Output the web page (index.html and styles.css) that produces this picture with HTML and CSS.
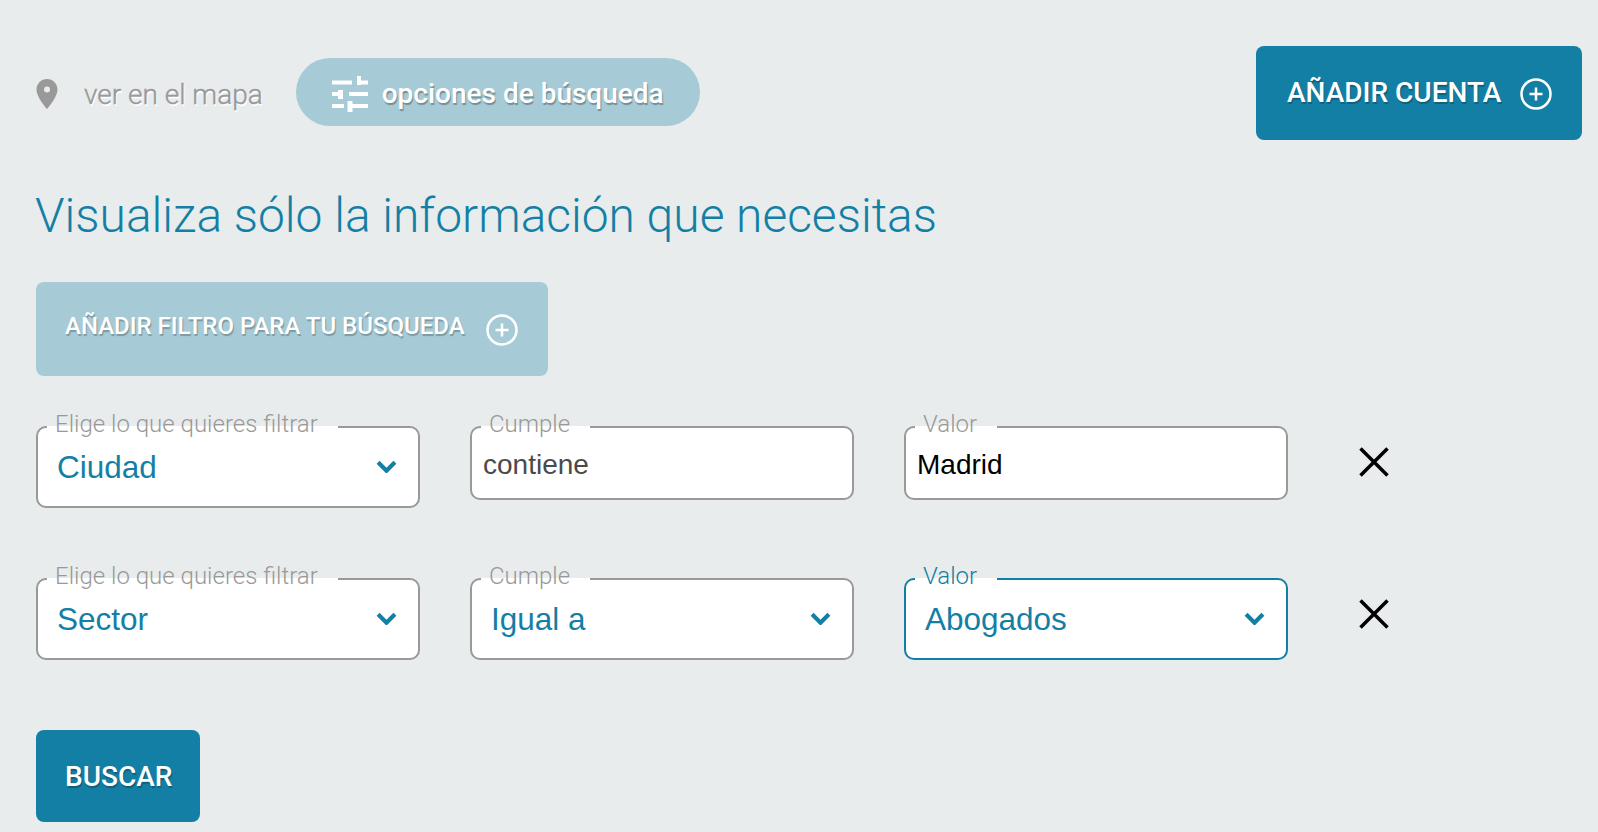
FILE: index.html
```html
<!DOCTYPE html>
<html lang="es">
<head>
<meta charset="utf-8">
<title>Visualiza sólo la información que necesitas</title>
<link rel="stylesheet" href="styles.css">
</head>
<body>
<main class="page">
  <header class="topbar">
    <div class="tools">
      <a class="map-link">
        <svg class="pin" viewBox="5 2 14 20"><path fill-rule="evenodd" d="M12 2C8.130 2 5 5.130 5 9c0 5.250 7 13 7 13s7-7.750 7-13c0-3.870-3.130-7-7-7zm0 9a2 2 0 0 1 0-4 2 2 0 0 1 0 4z"/></svg>
        <span>ver en el mapa</span>
      </a>
      <button class="pill">
        <svg class="sliders" viewBox="0 0 36 36"><path d="M0 4.500h20v4H0zM25 0h4v4.500h7v4h-7V9h-4zM0 16h6v4H0zM6 14h5v9H6zM17 16h19v4H17zM0 28h12v4H0zM15.500 25h5v3H36v4H20.500v4h-5z"/></svg>
        <span>opciones de búsqueda</span>
      </button>
    </div>
    <button class="btn btn-account">
      <span>AÑADIR CUENTA</span>
      <svg class="plus" viewBox="0 0 32 32"><circle cx="16" cy="16" r="14.500"/><path d="M16 9.500v13M9.500 16h13"/></svg>
    </button>
  </header>

  <h1 class="title">Visualiza sólo la información que necesitas</h1>

  <button class="btn btn-filter">
    <span>AÑADIR FILTRO PARA TU BÚSQUEDA</span>
    <svg class="plus plus-low" viewBox="0 0 32 32"><circle cx="16" cy="16" r="14.500"/><path d="M16 9.500v13M9.500 16h13"/></svg>
  </button>

  <section class="row">
    <div class="field select">
      <label class="lab lab-long">Elige lo que quieres filtrar</label>
      <span class="value">Ciudad</span>
      <svg class="chev" viewBox="0 0 20 12"><path d="M2 2l8 8 8-8"/></svg>
    </div>
    <div class="field input">
      <label class="lab">Cumple</label>
      <span class="text muted">contiene</span>
    </div>
    <div class="field input">
      <label class="lab">Valor</label>
      <span class="text">Madrid</span>
    </div>
    <svg class="close" viewBox="0 0 30 30"><path d="M1.500 1.500l27 27M28.500 1.500l-27 27"/></svg>
  </section>

  <section class="row">
    <div class="field select">
      <label class="lab lab-long">Elige lo que quieres filtrar</label>
      <span class="value">Sector</span>
      <svg class="chev" viewBox="0 0 20 12"><path d="M2 2l8 8 8-8"/></svg>
    </div>
    <div class="field select">
      <label class="lab">Cumple</label>
      <span class="value">Igual a</span>
      <svg class="chev" viewBox="0 0 20 12"><path d="M2 2l8 8 8-8"/></svg>
    </div>
    <div class="field select active">
      <label class="lab">Valor</label>
      <span class="value">Abogados</span>
      <svg class="chev" viewBox="0 0 20 12"><path d="M2 2l8 8 8-8"/></svg>
    </div>
    <svg class="close" viewBox="0 0 30 30"><path d="M1.500 1.500l27 27M28.500 1.500l-27 27"/></svg>
  </section>

  <button class="btn btn-search"><span>BUSCAR</span></button>
</main>
</body>
</html>
```
FILE: styles.css
```css
* { box-sizing: border-box; }
html, body { margin: 0; height: 100%; }
body {
  background: #e8eced;
  font-family: Roboto, "Liberation Sans", sans-serif;
  overflow: hidden;
}
.page { padding: 46px 16px 0 36px; }
.topbar { display: flex; justify-content: space-between; align-items: center; }
.tools { display: flex; align-items: center; margin-top: -2px; }
.map-link {
  display: flex; align-items: center; padding-top: 4px;
  color: #999; font-size: 28px; font-weight: 300;
  -webkit-text-stroke: .4px #999;
  text-shadow: 1px 2px 0 #fff;
}
.pin { width: 22px; height: 30px; fill: #999; margin-right: 26px; }
.pill {
  display: flex; align-items: center;
  width: 404px; height: 68px; margin-left: 33px; padding: 4px 0 0 36px;
  border: 0; border-radius: 34px; background: #a6cbd7;
  color: #fff; font: 500 28px Roboto, sans-serif;
  text-shadow: 1px 2px 1px rgba(0, 0, 0, .3);
}
.sliders { width: 36px; height: 36px; fill: #fff; margin-right: 14px; }
.pill span { position: relative; top: -1px; }
.btn {
  display: flex; align-items: center;
  border: 0; border-radius: 8px; background: #147fa5;
  color: #fff; font: 500 28px Roboto, sans-serif;
  text-shadow: 1px 2px 1px rgba(0, 0, 0, .25);
}
.plus { width: 32px; height: 32px; fill: none; stroke: #fff; stroke-width: 2.500; flex: none; }
.btn-account { width: 326px; height: 94px; padding: 2px 0 0 31px; gap: 19px; }
.btn-account span { position: relative; top: -2px; }
.title {
  margin: 46px 0 36px -1px; height: 60px;
  color: #147fa5; font-size: 47.900px; font-weight: 300; line-height: 60px;
}
.btn-filter {
  width: 512px; height: 94px; padding: 2px 0 0 29px; gap: 21px;
  background: #a6cbd7; font-size: 24px;
}
.btn-filter span { position: relative; top: -4px; }
.row { display: flex; align-items: flex-start; gap: 50px; margin-top: 50px; }
.row + .row { margin-top: 70px; }
.field {
  position: relative; display: flex; align-items: center; justify-content: space-between;
  width: 384px; background: #fff; border: 2px solid #999; border-radius: 10px;
}
.select { height: 82px; padding: 0 21px 0 19px; color: #147fa5; }
.input { height: 74px; padding: 3px 11px 0; }
.active { border-color: #147fa5; }
.active .lab { color: #147fa5; }
.lab {
  position: absolute; left: 9px; top: -18px;
  padding: 0 20px 0 8px;
  background: linear-gradient(transparent 16px, #fff 16px);
  color: #999; font-size: 24px; font-weight: 300; line-height: 28px; white-space: nowrap;
}
.value { font: 31.500px "Liberation Sans", sans-serif; }
.text { font: 28px "Liberation Sans", sans-serif; color: #000; }
.muted { color: #4a4a4a; }
.chev { width: 21px; height: 13px; margin-top: -2px; fill: none; stroke: #147fa5; stroke-width: 4; }
.close { width: 30px; height: 30px; margin: 21px 0 0 21px; fill: none; stroke: #000; stroke-width: 3.500; }
.btn-search { width: 164px; height: 92px; margin-top: 70px; padding: 0 0 0 29px; }
```
